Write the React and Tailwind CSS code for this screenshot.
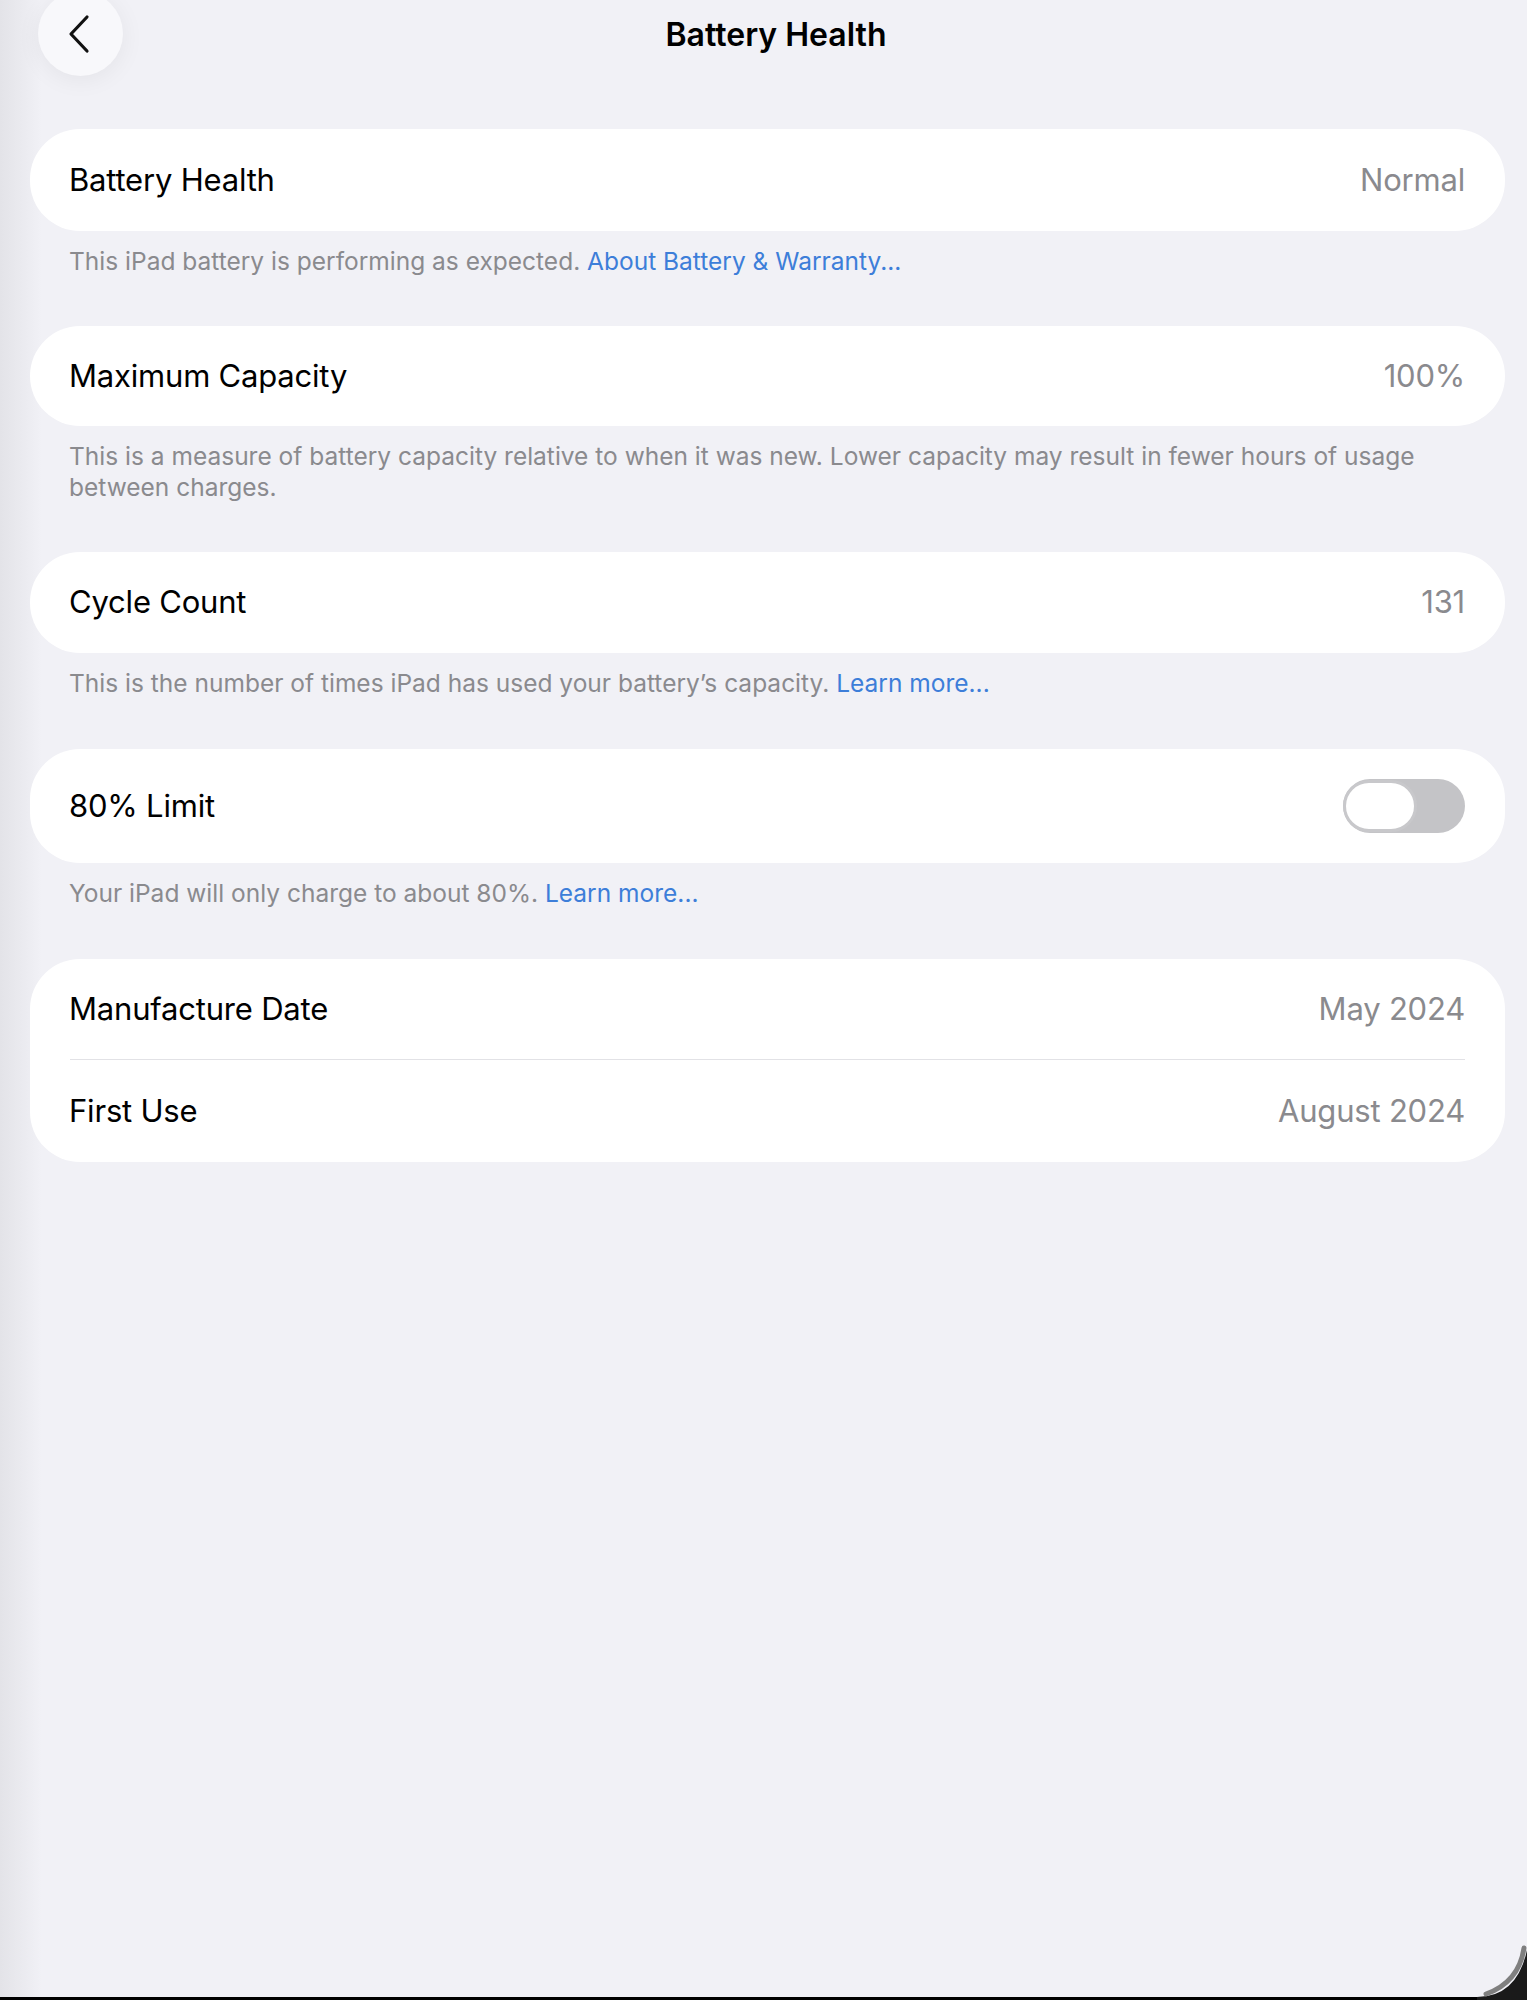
import React, { useState } from 'react';

const Row = ({ label, value, children, className = '' }) => (
  <div className={`flex items-center justify-between pl-[39px] pr-[40px] ${className}`}>
    <span className="text-[31px] text-black tracking-[-0.2px]">{label}</span>
    {value && <span className="text-[31px] text-[#8a8a8e] tracking-[-0.2px]">{value}</span>}
    {children}
  </div>
);

const Footnote = ({ children }) => (
  <p className="pt-[15px] pl-[39px] pr-[40px] text-[24.5px] leading-[31px] text-[#8a8a8e]">
    {children}
  </p>
);

const Link = ({ children }) => <span className="text-[#3d7ed9]">{children}</span>;

const App = () => {
  const [limit, setLimit] = useState(false);

  return (
    <div
      className="relative min-h-[2000px] flex flex-col bg-[linear-gradient(to_right,#e3e3e8,#f1f1f6_42px)] overflow-hidden"
      style={{ fontFamily: 'Inter, "Noto Sans", sans-serif' }}
    >
      {/* Nav bar */}
      <div className="flex items-start h-[129px]">
        <button className="ml-[38px] -mt-[9px] w-[85px] h-[85px] rounded-full bg-[#f8f8fb] shadow-[0_4px_24px_rgba(0,0,0,0.06)] flex items-center justify-center shrink-0">
          <svg width="24" height="40" viewBox="0 0 24 40" fill="none" className="-ml-[4px]">
            <path d="M20 3L4 20l16 17" stroke="#111" strokeWidth="3.2" strokeLinecap="round" strokeLinejoin="round" />
          </svg>
        </button>
        <h1 className="flex-1 text-center pr-[98px] pt-[11px] text-[32px] font-semibold text-black">
          Battery Health
        </h1>
      </div>

      <div className="px-[30px] pr-[22px] flex flex-col">
        {/* Battery Health */}
        <div className="mb-[49px]">
          <div className="bg-white rounded-[50px] h-[102px] flex flex-col justify-center">
            <Row label="Battery Health" value="Normal" />
          </div>
          <Footnote>
            This iPad battery is performing as expected. <Link>About Battery &amp; Warranty...</Link>
          </Footnote>
        </div>

        {/* Maximum Capacity */}
        <div className="mb-[49px]">
          <div className="bg-white rounded-[50px] h-[100px] flex flex-col justify-center">
            <Row label="Maximum Capacity" value="100%" />
          </div>
          <Footnote>
            This is a measure of battery capacity relative to when it was new. Lower capacity may result in fewer hours of usage
            <br />
            between charges.
          </Footnote>
        </div>

        {/* Cycle Count */}
        <div className="mb-[50px]">
          <div className="bg-white rounded-[50px] h-[101px] flex flex-col justify-center">
            <Row label="Cycle Count" value="131" />
          </div>
          <Footnote>
            This is the number of times iPad has used your battery’s capacity. <Link>Learn more...</Link>
          </Footnote>
        </div>

        {/* 80% Limit */}
        <div className="mb-[50px]">
          <div className="bg-white rounded-[50px] h-[114px] flex flex-col justify-center">
            <Row label="80% Limit">
              <button
                onClick={() => setLimit(!limit)}
                className={`relative w-[122px] h-[54px] rounded-full flex items-center ${limit ? 'bg-[#34c759] justify-end' : 'bg-[#c4c4c7] justify-start'}`}
              >
                <span className="block w-[74px] h-[52px] rounded-full bg-white border-[3px] border-[#c8c8cb]" />
              </button>
            </Row>
          </div>
          <Footnote>
            Your iPad will only charge to about 80%. <Link>Learn more...</Link>
          </Footnote>
        </div>

        {/* Dates */}
        <div className="bg-white rounded-[50px] flex flex-col">
          <Row label="Manufacture Date" value="May 2024" className="h-[100px]" />
          <div className="mx-[40px] h-px bg-[#e2e2e6]" />
          <Row label="First Use" value="August 2024" className="h-[102px]" />
        </div>
      </div>

      <div className="flex-1" />
      <div className="h-[3px] bg-black" />

      {/* screen corner */}
      <svg className="absolute right-0 bottom-0" width="50" height="60" viewBox="0 0 50 60">
        <path d="M50 10 L50 60 L0 60 L0 57 Q40 57 50 10Z" fill="#1a1a1a" />
        <path d="M47 8 Q42 42 9 54" stroke="#7f7f7f" strokeWidth="5" fill="none" strokeLinecap="round" />
      </svg>
    </div>
  );
};

export default App;
